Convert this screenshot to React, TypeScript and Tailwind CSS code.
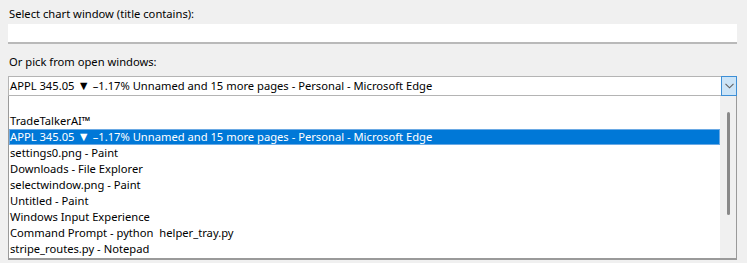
const items = [
  "",
  "TradeTalkerAI™",
  "APPL 345.05 ▼ –1.17% Unnamed and 15 more pages - Personal - Microsoft Edge",
  "settings0.png - Paint",
  "Downloads - File Explorer",
  "selectwindow.png - Paint",
  "Untitled - Paint",
  "Windows Input Experience",
  "Command Prompt - python  helper_tray.py",
  "stripe_routes.py - Notepad",
];

const selected = 2;

function ChevronDown() {
  return (
    <svg width="9" height="6" viewBox="0 0 9 6" fill="none">
      <path d="M0.5 0.8 L4.5 4.8 L8.5 0.8" stroke="#606060" strokeWidth="1.1" />
    </svg>
  );
}

function Title({ text }: { text: string }) {
  return (
    <span className="whitespace-pre">
      {text.split("▼").map((part, i) => (
        <span key={i}>
          {i > 0 && <span className="text-[12.5px]">▼</span>}
          {part}
        </span>
      ))}
    </span>
  );
}

export default function App() {
  return (
    <div
      className="h-[263px] w-[747px] overflow-hidden bg-[#f0f0f0] pl-2 pr-[10px] pt-[7px] text-[11.2px] text-black"
      style={{ fontFamily: '"Noto Sans", "Segoe UI", sans-serif' }}
    >
      <div className="h-[14px] pl-px leading-[14px]">Select chart window (title contains):</div>
      <div className="mt-[3px] h-[20px] border-b-2 border-[#b9b9b9] bg-white" />

      <div className="mt-[11px] h-[14px] pl-px leading-[14px]">Or pick from open windows:</div>

      <div className="mt-[7px] flex h-[20px] border border-[#b4b4b4] bg-white">
        <div className="flex-1 overflow-hidden pl-px leading-[18px]">
          <Title text={items[selected]} />
        </div>
        <div className="-mr-px -mt-px flex h-[20px] w-[16px] items-center justify-center border border-[#3d8fd6] bg-[#cce4f7]">
          <ChevronDown />
        </div>
      </div>

      <div className="flex h-[164px] border-x border-b-2 border-[#9a9a9a] bg-white">
        <div className="flex-1 overflow-hidden pt-px">
          {items.map((item, i) => (
            <div
              key={i}
              className={
                i === selected
                  ? "h-[16px] overflow-hidden bg-[#0078d7] pl-px leading-[16px] text-white outline outline-1 -outline-offset-1 outline-[#6aa9e4]"
                  : "h-[16px] overflow-hidden pl-px leading-[16px]"
              }
            >
              <Title text={item} />
            </div>
          ))}
        </div>
        <div className="flex w-[16px] justify-center bg-[#f0f0f0] pt-[16px]">
          <div className="h-[103px] w-[3px] rounded-full bg-[#8a8a8a]" />
        </div>
      </div>
    </div>
  );
}
